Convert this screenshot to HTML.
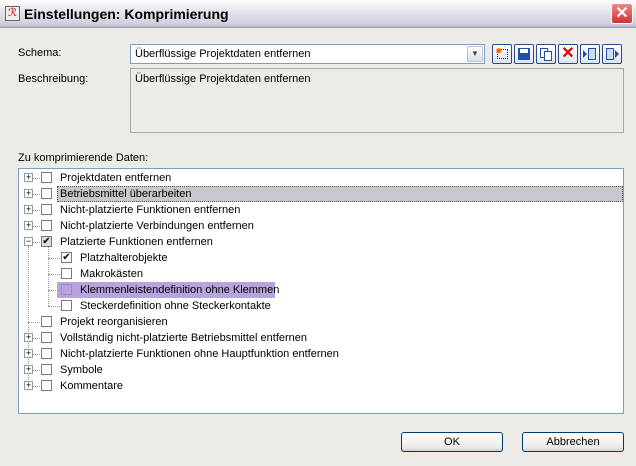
<!DOCTYPE html>
<html><head><style>
*{box-sizing:border-box;margin:0;padding:0}
body{width:636px;height:466px;overflow:hidden;background:#ecebe6;font-family:"Liberation Sans",sans-serif;font-size:11px;color:#000;position:relative}
.a{position:absolute}
.title{left:0;top:0;width:636px;height:28px;background:linear-gradient(#fdfdfd,#e6e6ee 40%,#cfcfdc 90%,#b8b8c8);border-bottom:1px solid #a0a0b0}
.title span{position:absolute;left:24px;top:6px;font-weight:bold;font-size:14px;font-family:"Liberation Sans",sans-serif;color:#000}
.close{left:611px;top:3px;width:22px;height:21px;background:linear-gradient(#e88,#c33);border:1px solid #fff;border-radius:3px;color:#fff;font-weight:bold;font-size:16px;text-align:center;line-height:19px}
.box{background:#fff;border:1px solid #7f9db9}
.tb{top:44px;width:20px;height:20px;border:1px solid #2a4a8a;border-radius:2px;background:linear-gradient(#fff,#dde3ef)}
.row{position:absolute;left:60px;height:16px;line-height:16px;white-space:nowrap}
.pm{position:absolute;width:9px;height:9px;border:1px solid #8a9bb0;background:#fff;font-size:9px;line-height:7px;text-align:center;color:#000}
.cb{position:absolute;width:11px;height:11px;border:1px solid #7a7a7a;background:#fff;font-size:10px;line-height:9px;text-align:center}
.btn{top:432px;height:20px;border:1px solid #003c74;border-radius:3px;background:linear-gradient(#fff,#ecebe6 80%,#d6d0c5);text-align:center;line-height:18px}
</style></head><body>
<div class="a title"><div class="a" style="left:5px;top:6px;width:15px;height:15px;background:#eee;border:1px solid #666;color:#c00;font-size:11px;line-height:13px;text-align:center">ℛ</div><span>Einstellungen: Komprimierung</span></div>
<div class="a close">✕</div>
<div class="a" style="left:18px;top:47px">Schema:</div>
<div class="a box" style="left:130px;top:44px;width:355px;height:20px;padding:3px 4px">Überflüssige Projektdaten entfernen<div class="a" style="right:1px;top:1px;width:16px;height:16px;background:linear-gradient(#fff,#dde);border:1px solid #b8c4dc;text-align:center;font-size:8px;line-height:14px;color:#444">▼</div></div>
<div class="a tb" style="left:492px"><div class="a" style="left:4px;top:4px;width:11px;height:10px;border:1px dotted #333"></div><div class="a" style="left:2px;top:1px;color:#f60;font-size:9px">✸</div></div>
<div class="a tb" style="left:514px"><div class="a" style="left:3px;top:3px;width:12px;height:12px;background:#1f4fa8"><div class="a" style="left:2px;top:1px;width:8px;height:4px;background:#fff"></div></div></div>
<div class="a tb" style="left:536px"><div class="a" style="left:3px;top:3px;width:8px;height:10px;border:1px solid #1f4fa8;background:#fff"></div><div class="a" style="left:7px;top:6px;width:8px;height:10px;border:1px solid #1f4fa8;background:#fff"></div></div>
<div class="a tb" style="left:558px;color:#d00;font-size:16px;font-weight:bold;text-align:center;line-height:17px">✕</div>
<div class="a tb" style="left:580px"><div class="a" style="left:2px;top:5px;width:0;height:0;border:4px solid transparent;border-left-color:#1f4fa8"></div><div class="a" style="left:7px;top:3px;width:8px;height:12px;border:1px solid #1f4fa8;background:#cde"></div></div>
<div class="a tb" style="left:602px"><div class="a" style="left:3px;top:3px;width:8px;height:12px;border:1px solid #1f4fa8;background:#cde"></div><div class="a" style="left:12px;top:5px;width:0;height:0;border:4px solid transparent;border-left-color:#1f4fa8"></div></div>
<div class="a" style="left:18px;top:73px">Beschreibung:</div>
<div class="a" style="left:130px;top:68px;width:494px;height:65px;border:1px solid #a8a8a8;background:#ecebe6;padding:4px 4px">Überflüssige Projektdaten entfernen</div>
<div class="a" style="left:18px;top:152px">Zu komprimierende Daten:</div>
<div class="a box" style="left:18px;top:168px;width:606px;height:246px"></div>
<div class="a" style="left:57px;top:186px;width:566px;height:16px;background:#c8c8cc;border:1px dotted #555"></div>
<div class="a" style="left:57px;top:282px;width:218px;height:16px;background:#b9a3dc"></div>
<div class="a" style="left:28px;top:246px;height:140px;border-left:1px dotted #999"></div>
<div class="a" style="left:48px;top:246px;height:60px;border-left:1px dotted #999"></div>
<div id="t"></div>
<script>
var rows=[["Projektdaten entfernen",0,'+',0],["Betriebsmittel überarbeiten",0,'+',0],["Nicht-platzierte Funktionen entfernen",0,'+',0],["Nicht-platzierte Verbindungen entfernen",0,'+',0],["Platzierte Funktionen entfernen",0,'−',1],["Platzhalterobjekte",1,'',1],["Makrokästen",1,'',0],["Klemmenleistendefinition ohne Klemmen",1,'',0],["Steckerdefinition ohne Steckerkontakte",1,'',0],["Projekt reorganisieren",0,'',0],["Vollständig nicht-platzierte Betriebsmittel entfernen",0,'+',0],["Nicht-platzierte Funktionen ohne Hauptfunktion entfernen",0,'+',0],["Symbole",0,'+',0],["Kommentare",0,'+',0]];
var h='';rows.forEach(function(r,i){var y=170+i*16;var ind=r[1]?20:0;
if(r[2])h+='<div class="pm" style="left:24px;top:'+(y+3)+'px">'+r[2]+'</div><div class="a" style="left:33px;top:'+(y+8)+'px;width:7px;border-top:1px dotted #999"></div>';
else h+='<div class="a" style="left:'+(28+ind)+'px;top:'+(y+8)+'px;width:12px;border-top:1px dotted #999"></div>';
h+='<div class="cb" style="left:'+(41+ind)+'px;top:'+(y+2)+'px;'+(r[0]=="Platzierte Funktionen entfernen"?'background:#ddd;':'')+(r[0].indexOf("Klemmen")==0?'background:transparent;border-color:#9a8ab8;':'')+'">'+(r[3]?'✔':'')+'</div>';
h+='<div class="row" style="left:'+(60+ind)+'px;top:'+y+'px">'+r[0]+'</div>';});
document.getElementById('t').innerHTML=h;
</script>
<div class="a btn" style="left:401px;width:102px">OK</div>
<div class="a btn" style="left:522px;width:102px">Abbrechen</div>
</body></html>
